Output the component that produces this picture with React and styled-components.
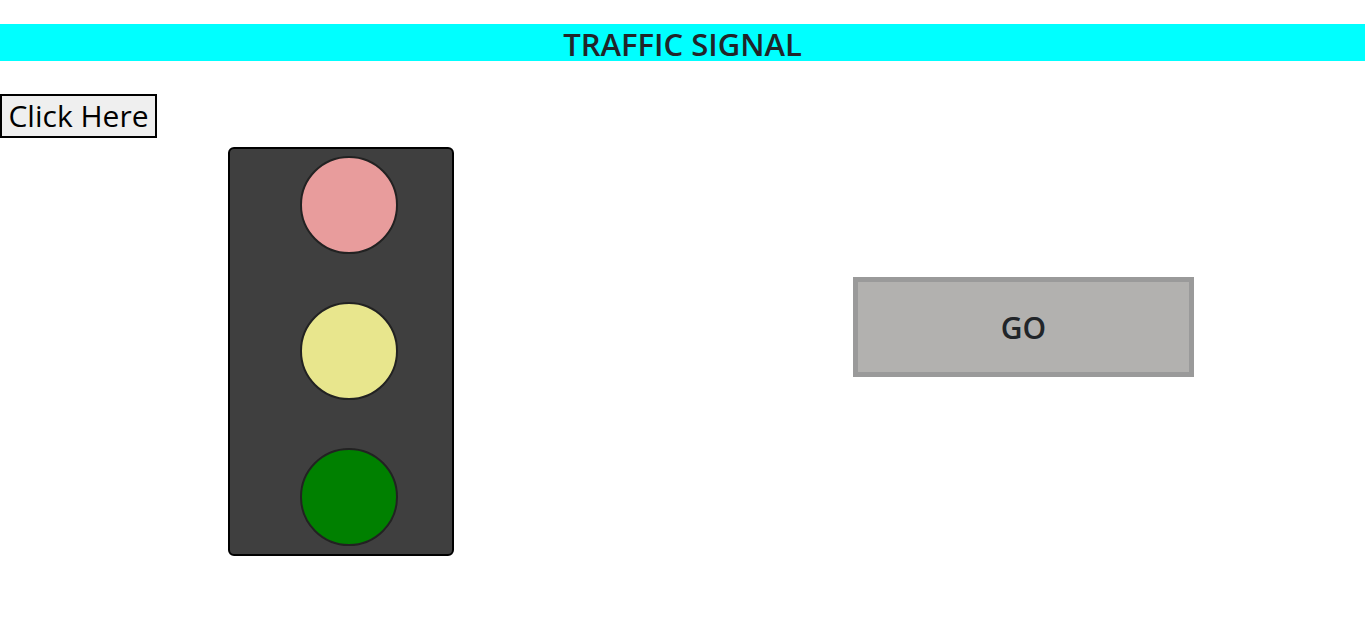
import React, { useState } from 'react'
import styled, { createGlobalStyle } from 'styled-components'

const GlobalStyle = createGlobalStyle`
  body {
    margin: 0;
    font-family: "Open Sans", "Noto Sans", sans-serif;
    color: #212529;
    background: #fff;
  }
`

const Header = styled.h3`
  margin: 24px 0 0;
  height: 37px;
  background-color: cyan;
  text-align: center;
  font-size: 31px;
  font-weight: 600;
  line-height: 40px;
  color: #212529;
`

const ToggleButton = styled.button`
  display: block;
  margin-top: 33px;
  width: 157px;
  height: 44px;
  padding: 0;
  font-family: "Open Sans", "Noto Sans", sans-serif;
  font-size: 30px;
  line-height: 40px;
  color: #000;
  background-color: #efefef;
  border: 2px solid #000;
  border-radius: 0;
  cursor: pointer;
`

const Stage = styled.div`
  display: flex;
  align-items: flex-start;
  margin-top: 9px;
  padding-left: 228px;
`

const Signal = styled.div`
  box-sizing: border-box;
  width: 226px;
  height: 409px;
  padding: 7px 54px 0 70px;
  display: flex;
  flex-direction: column;
  gap: 48px;
  background-color: #3f3f3f;
  border: 2px solid #000;
  border-radius: 6px;
`

const Lamp = styled.div`
  box-sizing: border-box;
  width: 98px;
  height: 98px;
  border-radius: 50%;
  border: 2px solid #222;
  background-color: ${(props) => props.color};
`

const Status = styled.div`
  box-sizing: border-box;
  margin: 130px 0 0 399px;
  width: 341px;
  height: 100px;
  display: flex;
  align-items: center;
  justify-content: center;
  background-color: #b2b1af;
  border: 5px solid #9a9a9a;
  font-size: 30px;
  font-weight: 600;
  color: #212529;
`

const states = [
  { label: 'STOP', colors: ['red', '#e8e68d', '#7fbf7f'] },
  { label: 'WAIT', colors: ['#e89c9c', 'yellow', '#7fbf7f'] },
  { label: 'GO', colors: ['#e89c9c', '#e8e68d', 'green'] },
]

function App() {
  const [index, setIndex] = useState(2)
  const current = states[index]

  return (
    <>
      <GlobalStyle />
      <Header>TRAFFIC SIGNAL</Header>
      <ToggleButton onClick={() => setIndex((index + 1) % 3)}>Click Here</ToggleButton>
      <Stage>
        <Signal>
          {current.colors.map((c, i) => (
            <Lamp key={i} color={c} />
          ))}
        </Signal>
        <Status>{current.label}</Status>
      </Stage>
    </>
  )
}

export default App
